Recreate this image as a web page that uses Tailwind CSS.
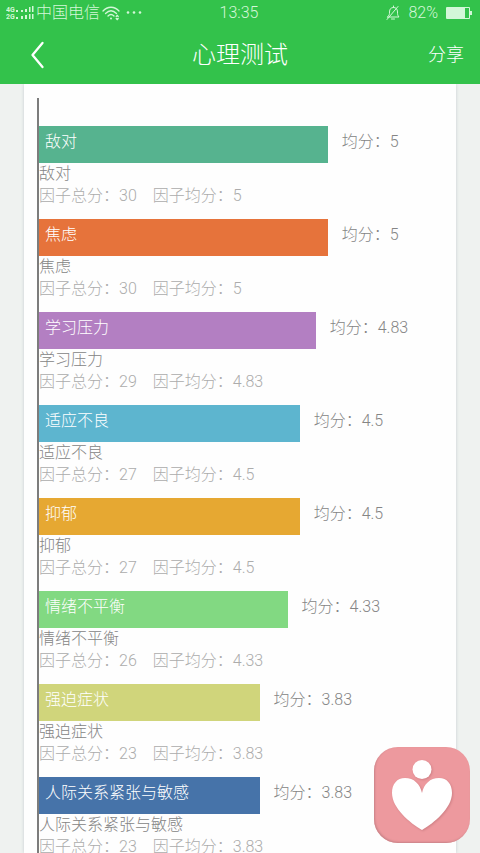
<!DOCTYPE html>
<html lang="zh-CN">
<head>
  <meta charset="UTF-8" />
  <meta name="viewport" content="width=device-width, initial-scale=1.0" />
  <title>心理测试</title>
  <!-- Tailwind -->
  <script src="https://cdn.jsdelivr.net/npm/@tailwindcss/browser@4"></script>
</head>
<body class="h-screen flex flex-col overflow-hidden bg-[#eff2f0] font-['Roboto','Noto_Sans_CJK_SC',sans-serif] font-light">
  <header class="relative z-10 shrink-0 bg-[#33c24b] text-white">
    <!-- Status bar -->
    <div class="grid grid-cols-[1fr_auto_1fr] items-center h-[26px] pl-1.5 pr-2 text-base leading-6 text-[#d3f7d8]">
      <div class="flex items-center gap-0.5">
        <svg class="w-7 h-4" viewBox="0 0 28 16" fill="currentColor" aria-hidden="true">
          <text x="0" y="7" font-size="7" font-weight="700">4G</text>
          <text x="0" y="14" font-size="7" font-weight="700">2G</text>
          <path d="M10 5h2v2h-2zM15 5h2v2h-2zM19 4h2v3h-2zM23 2h1.500v5H23zM26 1h1.500v6H26zM10 12h2v2h-2zM15 11h2v3h-2zM19 10h2v4h-2zM23 9h1.500v5H23zM26 9h1.500v5H26z"/>
        </svg>
        <span>中国电信</span>
        <svg class="w-[18px] h-4" viewBox="0 0 18 16" fill="none" stroke="currentColor" stroke-width="1.3" stroke-linecap="round" aria-hidden="true">
          <path d="M1 6C5.500 1 12.500 1 17 6M3.500 8.500C7 5 11 5 14.500 8.500M6 11c2-2 4-2 6 0"/>
          <circle cx="9" cy="13.500" r="1" fill="currentColor" stroke="none"/>
          <path d="M14.200 11.500l1-1 1 1M14.200 13.500l1 1 1-1"/>
        </svg>
        <svg class="w-5 h-4" viewBox="0 0 20 16" fill="currentColor" aria-hidden="true">
          <circle cx="6" cy="7.500" r="1.300"/><circle cx="12" cy="7.500" r="1.300"/><circle cx="18" cy="7.500" r="1.300"/>
        </svg>
      </div>
      <time>13:35</time>
      <div class="flex items-center justify-end gap-2">
        <svg class="w-3.5 h-4" viewBox="0 0 14 16" fill="none" stroke="currentColor" stroke-width="1" stroke-linecap="round" stroke-linejoin="round" aria-hidden="true">
          <path d="M1.500 12h11.500c-1.500-1.500-1.500-3-1.500-5 0-3-1.500-4.500-4-4.500S3.500 4 3.500 7c0 2 0 3.500-2 5zM5.500 14h3M7.500 1v1.500M1 14.500L12 1.500"/>
        </svg>
        <span>82%</span>
        <svg class="w-[26px] h-3" viewBox="0 0 26 12" fill="none" stroke="currentColor" aria-hidden="true">
          <path d="M.5.5h23v11H.5z"/>
          <path d="M1 1h18v10H1zM24 4h2v4h-2z" fill="currentColor" stroke="none"/>
        </svg>
      </div>
    </div>
    <!-- Nav -->
    <div class="grid grid-cols-[1fr_auto_1fr] items-center h-[58px] px-4">
      <button type="button" aria-label="返回" class="justify-self-start w-11 h-10 flex items-center justify-center">
        <svg class="w-4 h-7" viewBox="0 0 16 28" fill="none" stroke="currentColor" stroke-width="2.300" stroke-linecap="round" stroke-linejoin="round">
          <path d="M12.500 2L2.500 14l10 12"/>
        </svg>
      </button>
      <h1 class="text-2xl font-light">心理测试</h1>
      <button type="button" class="justify-self-end text-lg font-light">分享</button>
    </div>
  </header>

  <!-- Card -->
  <main class="flex-1 min-h-0 overflow-y-auto [scrollbar-width:none] mx-6 pl-[13px] pr-4 pt-3.5 bg-[#fefefe] shadow-[0_0_3px_#c5cbd0]">
    <ul class="border-l-2 border-[#7c7c7c] pt-7 text-base leading-[22px] text-[#858585]">
      <li class="pb-3">
        <div class="flex gap-3.5 h-[37px] leading-8">
          <div class="w-[72%] px-1.5 bg-[#56b38f] text-white">敌对</div>
          <span>均分：5</span>
        </div>
        <p>敌对</p>
        <p class="flex gap-4 text-[#acacac]"><span>因子总分：30</span><span>因子均分：5</span></p>
      </li>
      <li class="pb-3">
        <div class="flex gap-3.5 h-[37px] leading-8">
          <div class="w-[72%] px-1.5 bg-[#e6733b] text-white">焦虑</div>
          <span>均分：5</span>
        </div>
        <p>焦虑</p>
        <p class="flex gap-4 text-[#acacac]"><span>因子总分：30</span><span>因子均分：5</span></p>
      </li>
      <li class="pb-3">
        <div class="flex gap-3.5 h-[37px] leading-8">
          <div class="w-[69%] px-1.5 bg-[#b37fc2] text-white">学习压力</div>
          <span>均分：4.83</span>
        </div>
        <p>学习压力</p>
        <p class="flex gap-4 text-[#acacac]"><span>因子总分：29</span><span>因子均分：4.83</span></p>
      </li>
      <li class="pb-3">
        <div class="flex gap-3.5 h-[37px] leading-8">
          <div class="w-[65%] px-1.5 bg-[#5db5cf] text-white">适应不良</div>
          <span>均分：4.5</span>
        </div>
        <p>适应不良</p>
        <p class="flex gap-4 text-[#acacac]"><span>因子总分：27</span><span>因子均分：4.5</span></p>
      </li>
      <li class="pb-3">
        <div class="flex gap-3.5 h-[37px] leading-8">
          <div class="w-[65%] px-1.5 bg-[#e6a832] text-white">抑郁</div>
          <span>均分：4.5</span>
        </div>
        <p>抑郁</p>
        <p class="flex gap-4 text-[#acacac]"><span>因子总分：27</span><span>因子均分：4.5</span></p>
      </li>
      <li class="pb-3">
        <div class="flex gap-3.5 h-[37px] leading-8">
          <div class="w-[62%] px-1.5 bg-[#82d982] text-white">情绪不平衡</div>
          <span>均分：4.33</span>
        </div>
        <p>情绪不平衡</p>
        <p class="flex gap-4 text-[#acacac]"><span>因子总分：26</span><span>因子均分：4.33</span></p>
      </li>
      <li class="pb-3">
        <div class="flex gap-3.5 h-[37px] leading-8">
          <div class="w-[55%] px-1.5 bg-[#d0d57b] text-white">强迫症状</div>
          <span>均分：3.83</span>
        </div>
        <p>强迫症状</p>
        <p class="flex gap-4 text-[#acacac]"><span>因子总分：23</span><span>因子均分：3.83</span></p>
      </li>
      <li class="pb-3">
        <div class="flex gap-3.5 h-[37px] leading-8">
          <div class="w-[55%] px-1.5 bg-[#4673a9] text-white">人际关系紧张与敏感</div>
          <span>均分：3.83</span>
        </div>
        <p>人际关系紧张与敏感</p>
        <p class="flex gap-4 text-[#acacac]"><span>因子总分：23</span><span>因子均分：3.83</span></p>
      </li>
    </ul>
  </main>

  <!-- Floating button -->
  <button type="button" aria-label="心理咨询" class="fixed z-20 right-2.5 bottom-2.5 w-24 h-24 rounded-3xl bg-[#ed999e] shadow-[inset_1px_-1px_2px_#c98388]">
    <svg class="w-24 h-24 drop-shadow-[1px_1px_1px_#cf8085]" viewBox="0 0 96 96" fill="#fff">
      <circle cx="48" cy="22.500" r="9.500"/>
      <path d="M48 83C36 76 18 61 18 46c0-9 5-15 13-15 9 0 15 6 17 15 2-9 8-15 17-15 8 0 13 6 13 15 0 15-18 30-30 37z"/>
    </svg>
  </button>
</body>
</html>
